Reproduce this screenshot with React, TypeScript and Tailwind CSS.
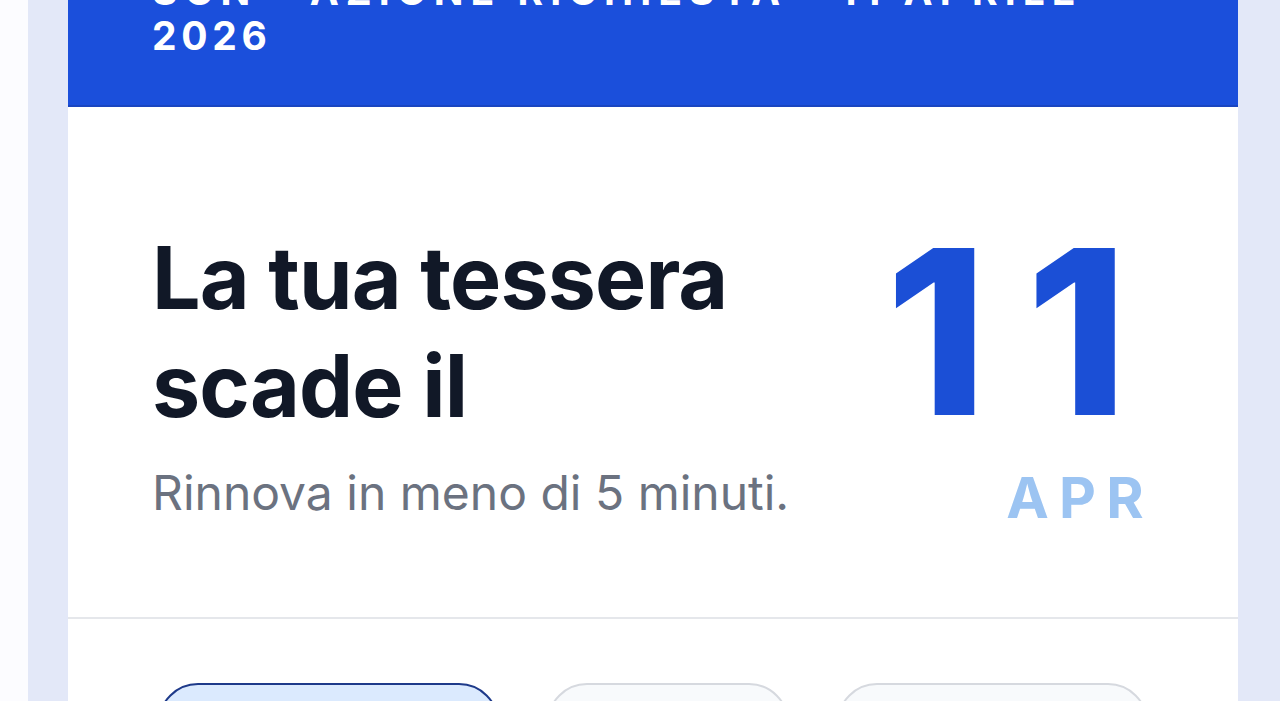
export default function App() {
  return (
    <div className="flex h-[701px] w-[1280px] overflow-hidden bg-[#fcfcff] pl-[28px] font-['Inter',sans-serif]">
      <div className="flex h-full flex-1 bg-[#e3e8f8] pl-[40px] pr-[42px]">
        <div className="flex h-full w-[1170px] flex-col bg-white">
          <div className="h-[107px] shrink-0 overflow-hidden border-b-2 border-[#1a45c0] bg-[#1b4fdb] px-[84px]">
            <div className="-mt-[32px] text-[39px] font-bold leading-[45px] text-white">
              <div className="whitespace-nowrap tracking-[0.18em]">SCN · AZIONE RICHIESTA · 11 APRILE</div>
              <div className="tracking-[0.12em]">2026</div>
            </div>
          </div>

          <div className="flex h-[510px] shrink-0 items-start justify-between px-[84px] pt-[117px]">
            <div className="flex flex-col">
              <h1 className="text-[86px] font-bold leading-[108px] tracking-[-0.01em] text-[#111827]">
                La tua tessera
                <br />
                scade il
              </h1>
              <p className="mt-[29px] text-[48px] leading-none text-[#6b7280]">
                Rinnova in meno di 5 minuti.
              </p>
            </div>
            <div className="-mt-[8px] flex flex-col items-end">
              <div className="-mr-[13px] text-[230px] font-extrabold leading-none tracking-[0.17em] text-[#1b4fd6]">
                11
              </div>
              <div className="mt-[23px] text-[57px] font-bold leading-none tracking-[0.18em] text-[#9cc4f2]">
                APR
              </div>
            </div>
          </div>

          <div className="h-[2px] shrink-0 bg-[#e5e7eb]" />

          <div className="flex gap-[48px] px-[90px] pt-[64px]">
            <button className="h-[80px] w-[342px] rounded-t-[40px] border-2 border-[#1e3a8a] bg-[#dbeafe]" />
            <button className="h-[80px] w-[242px] rounded-t-[40px] border-2 border-[#d6d9df] bg-[#f8fafc]" />
            <button className="h-[80px] w-[312px] rounded-t-[40px] border-2 border-[#d6d9df] bg-[#f8fafc]" />
          </div>
        </div>
      </div>
    </div>
  );
}
